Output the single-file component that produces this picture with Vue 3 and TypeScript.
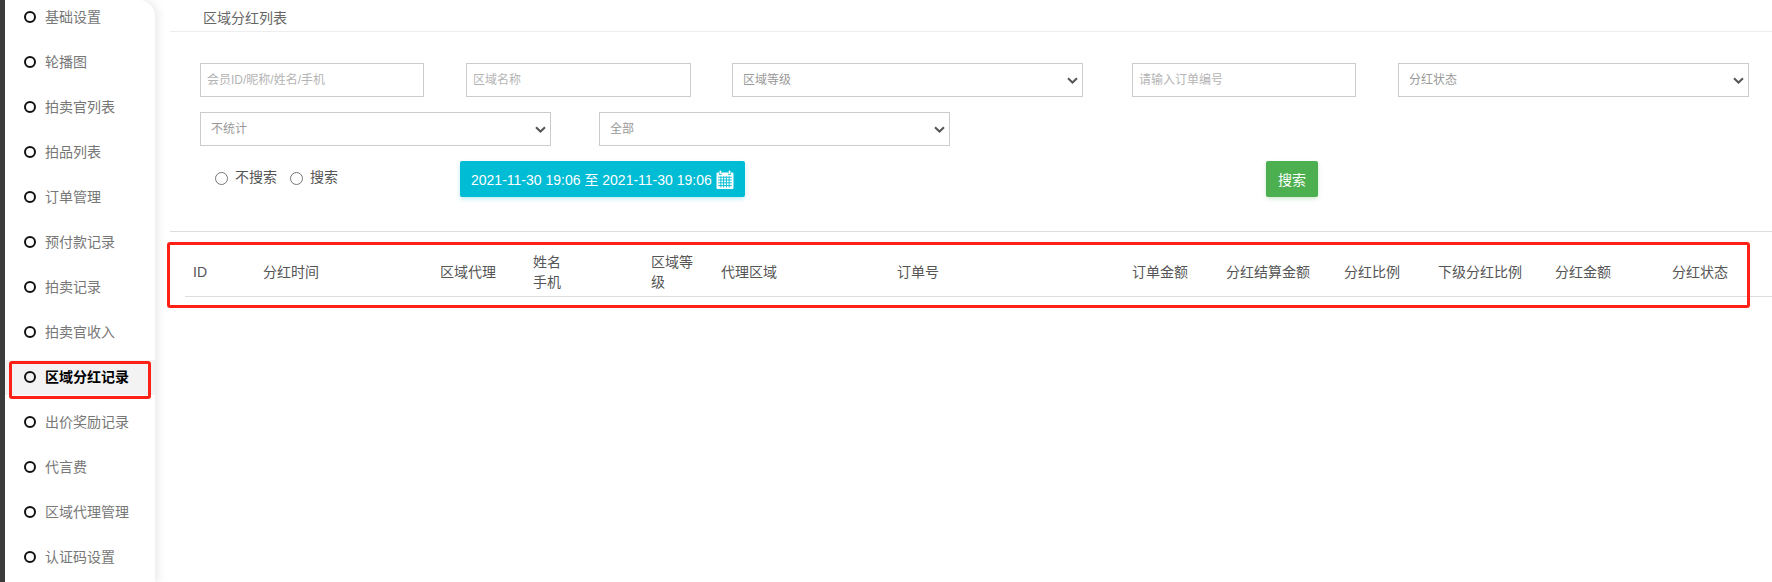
<script setup lang="ts">
const menu: string[] = ['基础设置', '轮播图', '拍卖官列表', '拍品列表', '订单管理', '预付款记录', '拍卖记录', '拍卖官收入', '区域分红记录', '出价奖励记录', '代言费', '区域代理管理', '认证码设置']
const columns: string[] = ['ID', '分红时间', '区域代理', '姓名<br>手机', '区域等级', '代理区域', '订单号', '订单金额', '分红结算金额', '分红比例', '下级分红比例', '分红金额', '分红状态']
const widths: number[] = [70, 177, 93, 118, 70, 176, 235, 94, 118, 94, 117, 117]
</script>

<template>
  <div class="page">
    <aside class="sidebar">
      <div v-for="m in menu" :key="m" class="item" :class="{ active: m === '区域分红记录' }">
        <span class="ring"></span><span class="label">{{ m }}</span>
      </div>
    </aside>
    <main class="main">
      <div class="title">区域分红列表</div>
      <form class="filters" @submit.prevent>
        <div class="row">
          <input class="ctl w1" placeholder="会员ID/昵称/姓名/手机" />
          <input class="ctl w2" placeholder="区域名称" />
          <select class="ctl w3"><option>区域等级</option></select>
          <input class="ctl w4" placeholder="请输入订单编号" />
          <select class="ctl w5"><option>分红状态</option></select>
        </div>
        <div class="row">
          <select class="ctl w6"><option>不统计</option></select>
          <select class="ctl w7"><option>全部</option></select>
        </div>
        <div class="row actions">
          <label class="radio"><input type="radio" name="s" /><span class="label">不搜索</span></label>
          <label class="radio second"><input type="radio" name="s" /><span class="label">搜索</span></label>
          <button type="button" class="btn date">
            2021-11-30 19:06 至 2021-11-30 19:06
            <svg width="18" height="19" viewBox="0 0 17 19" preserveAspectRatio="none" fill="none" aria-hidden="true">
              <path d="M0.5 3.5a1 1 0 0 1 1-1H3V5h2.2V2.5h6.6V5H14V2.5h1.5a1 1 0 0 1 1 1V18a1 1 0 0 1-1 1h-14a1 1 0 0 1-1-1z" fill="#fff"/>
              <rect x="3.4" y="0.5" width="1.6" height="3.8" rx="0.8" fill="#fff"/>
              <rect x="12" y="0.5" width="1.6" height="3.8" rx="0.8" fill="#fff"/>
              <path d="M2 7.2h13M2 10h13M2 12.8h13M2 15.6h13M4.6 6.5v11M7.2 6.5v11M9.8 6.5v11M12.4 6.5v11" stroke="#00bcd4" stroke-width="0.9"/>
            </svg>
          </button>
          <button type="button" class="btn search">搜索</button>
        </div>
      </form>
      <table class="grid">
        <colgroup><col v-for="(w, i) in widths" :key="i" :width="w" /><col /></colgroup>
        <thead>
          <tr><th v-for="c in columns" :key="c" v-html="c"></th></tr>
        </thead>
      </table>
    </main>
    <div class="mark mark-menu"></div>
    <div class="mark mark-table"></div>
  </div>
</template>

<style>
html, body { margin: 0; background: #fff; }
</style>

<style scoped>
.page {
  position: relative;
  display: flex;
  width: 1772px;
  height: 582px;
  overflow: hidden;
  font-family: "Liberation Sans", "Noto Sans CJK SC", sans-serif;
  font-size: 14px;
  background: #fff;
  border-left: 5px solid #3b3b3b;
  box-sizing: border-box;
}
.sidebar {
  flex: 0 0 150px;
  background: #fff;
  border-top-right-radius: 16px;
  box-shadow: 3px 0 10px rgba(0, 0, 0, 0.09);
}
.item {
  box-sizing: border-box;
  display: flex;
  align-items: center;
  gap: 9px;
  height: 35px;
  margin-bottom: 10px;
  padding: 0 0 2px 19px;
  color: #777;
}
.label { padding-bottom: 2px; }
.item.active {
  background: #f3f3f3;
  color: #000;
  font-weight: 700;
}
.ring {
  box-sizing: border-box;
  width: 12px;
  height: 12px;
  border: 2px solid #111;
  border-radius: 50%;
}
.main {
  flex: 1;
  min-width: 0;
  margin-left: 15px;
}
.title {
  height: 32px;
  line-height: 36px;
  padding-left: 33px;
  color: #666;
  border-bottom: 1px solid #eee;
  box-sizing: border-box;
}
.filters {
  padding: 31px 0 34px 30px;
  border-bottom: 1px solid #ddd;
}
.row {
  display: flex;
  align-items: center;
  margin-bottom: 15px;
}
.actions { margin-bottom: 0; }
.ctl {
  box-sizing: border-box;
  height: 34px;
  padding: 6px;
  border: 1px solid #ccc;
  border-radius: 0;
  background: #fff;
  color: #999;
  font: 12px "Liberation Sans", "Noto Sans CJK SC", sans-serif;
}
select.ctl {
  appearance: none;
  padding-left: 10px;
  background: #fff url("data:image/svg+xml,%3Csvg xmlns='http://www.w3.org/2000/svg' width='11' height='7'%3E%3Cpath d='M1 1.2l4.5 4.3L10 1.2' fill='none' stroke='%23555' stroke-width='2'/%3E%3C/svg%3E") no-repeat right 4px center;
}
.ctl::placeholder { color: #b4b4b4; }
.w1 { width: 224px; }
.w2 { width: 225px; margin-left: 42px; }
.w3 { width: 351px; margin-left: 41px; }
.w4 { width: 224px; margin-left: 49px; }
.w5 { width: 351px; margin-left: 42px; }
.w6 { width: 351px; }
.w7 { width: 351px; margin-left: 48px; }
.radio {
  display: flex;
  align-items: center;
  padding-bottom: 2px;
  color: #555;
  margin-left: 15px;
}
.radio .label { padding-bottom: 4px; }
.radio input { margin: 0 7px 0 0; width: 13px; height: 13px; }
.radio.second { margin-left: 13px; }
.btn {
  height: 36px;
  border: 0;
  border-radius: 2px;
  color: #fff;
  font: 14px "Liberation Sans", "Noto Sans CJK SC", sans-serif;
}
.date {
  display: flex;
  align-items: center;
  gap: 4px;
  width: 285px;
  margin-left: 122px;
  padding: 0 0 0 11px;
  background: #00bcd4;
  box-shadow: 0 2px 4px rgba(0, 188, 212, 0.25);
  white-space: nowrap;
}
.search {
  width: 52px;
  margin-left: 521px;
  padding: 0;
  background: #4caf50;
  box-shadow: 0 2px 4px rgba(76, 175, 80, 0.25);
}
.grid {
  table-layout: fixed;
  border-collapse: collapse;
  width: calc(100% - 15px);
  margin: 16px 0 0 15px;
}
.grid th {
  height: 48px;
  padding: 0 8px;
  text-align: left;
  font-weight: 400;
  line-height: 20px;
  color: #555;
  border-bottom: 1px solid #ddd;
}
.mark {
  position: absolute;
  box-sizing: border-box;
  border: 3px solid #ff2016;
  border-radius: 3px;
  pointer-events: none;
}
.mark-menu { left: 4px; top: 361px; width: 142px; height: 38px; }
.mark-table { left: 162px; top: 242px; width: 1583px; height: 66px; }
</style>
